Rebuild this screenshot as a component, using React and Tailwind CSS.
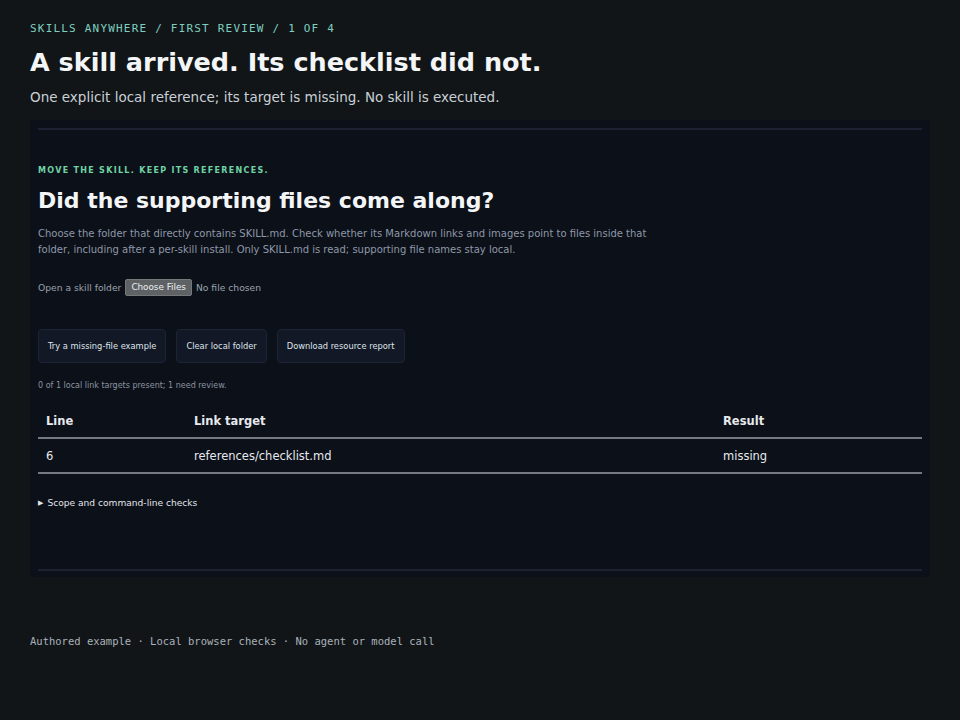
const sans = { fontFamily: '"DejaVu Sans", sans-serif' }
const mono = { fontFamily: '"DejaVu Sans Mono", monospace' }

const rows = [{ line: 6, target: 'references/checklist.md', result: 'missing' }]

function ActionButton({ children }) {
  return (
    <button className="h-[34px] px-[9px] rounded-[4px] border border-[#1d2434] bg-[#121826] text-[8.3px] text-[#dfe4ea]">
      {children}
    </button>
  )
}

function FilePicker() {
  return (
    <div className="flex items-center gap-[4px] text-[9.2px] text-[#9aa3ae]">
      <span>Open a skill folder</span>
      <span className="px-[5px] py-[1px] rounded-[2px] bg-[#5f6265] border border-[#75787b] text-[#eceff1] text-[8.8px] leading-[13px]">
        Choose Files
      </span>
      <span>No file chosen</span>
    </div>
  )
}

function ResultTable() {
  return (
    <table className="w-full border-collapse text-[11.5px] text-[#e6e9ee]">
      <thead>
        <tr className="border-b-2 border-[#737a84]">
          <th className="w-[148px] px-[8px] py-[7px] text-left font-bold">Line</th>
          <th className="px-[8px] py-[7px] text-left font-bold">Link target</th>
          <th className="w-[207px] px-[8px] py-[7px] text-left font-bold">Result</th>
        </tr>
      </thead>
      <tbody>
        {rows.map((r) => (
          <tr key={r.line} className="border-b-2 border-[#737a84]">
            <td className="px-[8px] pt-[9px] pb-[6px]">{r.line}</td>
            <td className="px-[8px] pt-[9px] pb-[6px]">{r.target}</td>
            <td className="px-[8px] pt-[9px] pb-[6px]">{r.result}</td>
          </tr>
        ))}
      </tbody>
    </table>
  )
}

export default function App() {
  return (
    <div className="min-h-[720px] bg-[#111518] px-[30px] pt-[22px]" style={sans}>
      <p className="text-[11px] leading-[14px] tracking-[1.2px] text-[#7fcfc0]" style={mono}>
        SKILLS ANYWHERE / FIRST REVIEW / 1 OF 4
      </p>
      <h1 className="mt-[11px] text-[25.5px] leading-[30px] font-bold text-[#f3f5f7]">
        A skill arrived. Its checklist did not.
      </h1>
      <p className="mt-[11px] text-[13.5px] leading-[18px] text-[#c9d0d6]">
        One explicit local reference; its target is missing. No skill is executed.
      </p>

      <section className="mt-[14px] bg-[#0c1018] px-[8px] pt-[8px] pb-[6px]">
        <div className="border-y-2 border-[#1d2233] h-[443px]">
          <p className="mt-[36px] text-[8px] leading-[10px] font-bold tracking-[1.3px] text-[#6fd3a6]">
            MOVE THE SKILL. KEEP ITS REFERENCES.
          </p>
          <h2 className="mt-[12px] text-[22px] leading-[26px] font-bold text-[#f3f5f7]">
            Did the supporting files come along?
          </h2>
          <p className="mt-[12px] max-w-[640px] text-[10px] leading-[16px] text-[#8e98a8]">
            Choose the folder that directly contains SKILL.md. Check whether its Markdown links and images point to files inside that
            folder, including after a per-skill install. Only SKILL.md is read; supporting file names stay local.
          </p>
          <div className="mt-[21px]">
            <FilePicker />
          </div>
          <div className="mt-[33px] flex gap-[10px]">
            <ActionButton>Try a missing-file example</ActionButton>
            <ActionButton>Clear local folder</ActionButton>
            <ActionButton>Download resource report</ActionButton>
          </div>
          <p className="mt-[17px] text-[8px] leading-[12px] text-[#8a94a0]">
            0 of 1 local link targets present; 1 need review.
          </p>
          <div className="mt-[14px]">
            <ResultTable />
          </div>
          <p className="mt-[23px] flex items-center gap-[4px] text-[9.1px] leading-[12px] text-[#e2e6ea]">
            <span className="text-[7px]">▶</span>
            Scope and command-line checks
          </p>
        </div>
      </section>

      <p className="mt-[57px] text-[10.5px] leading-[14px] text-[#a9b2ba]" style={mono}>
        Authored example · Local browser checks · No agent or model call
      </p>
    </div>
  )
}
